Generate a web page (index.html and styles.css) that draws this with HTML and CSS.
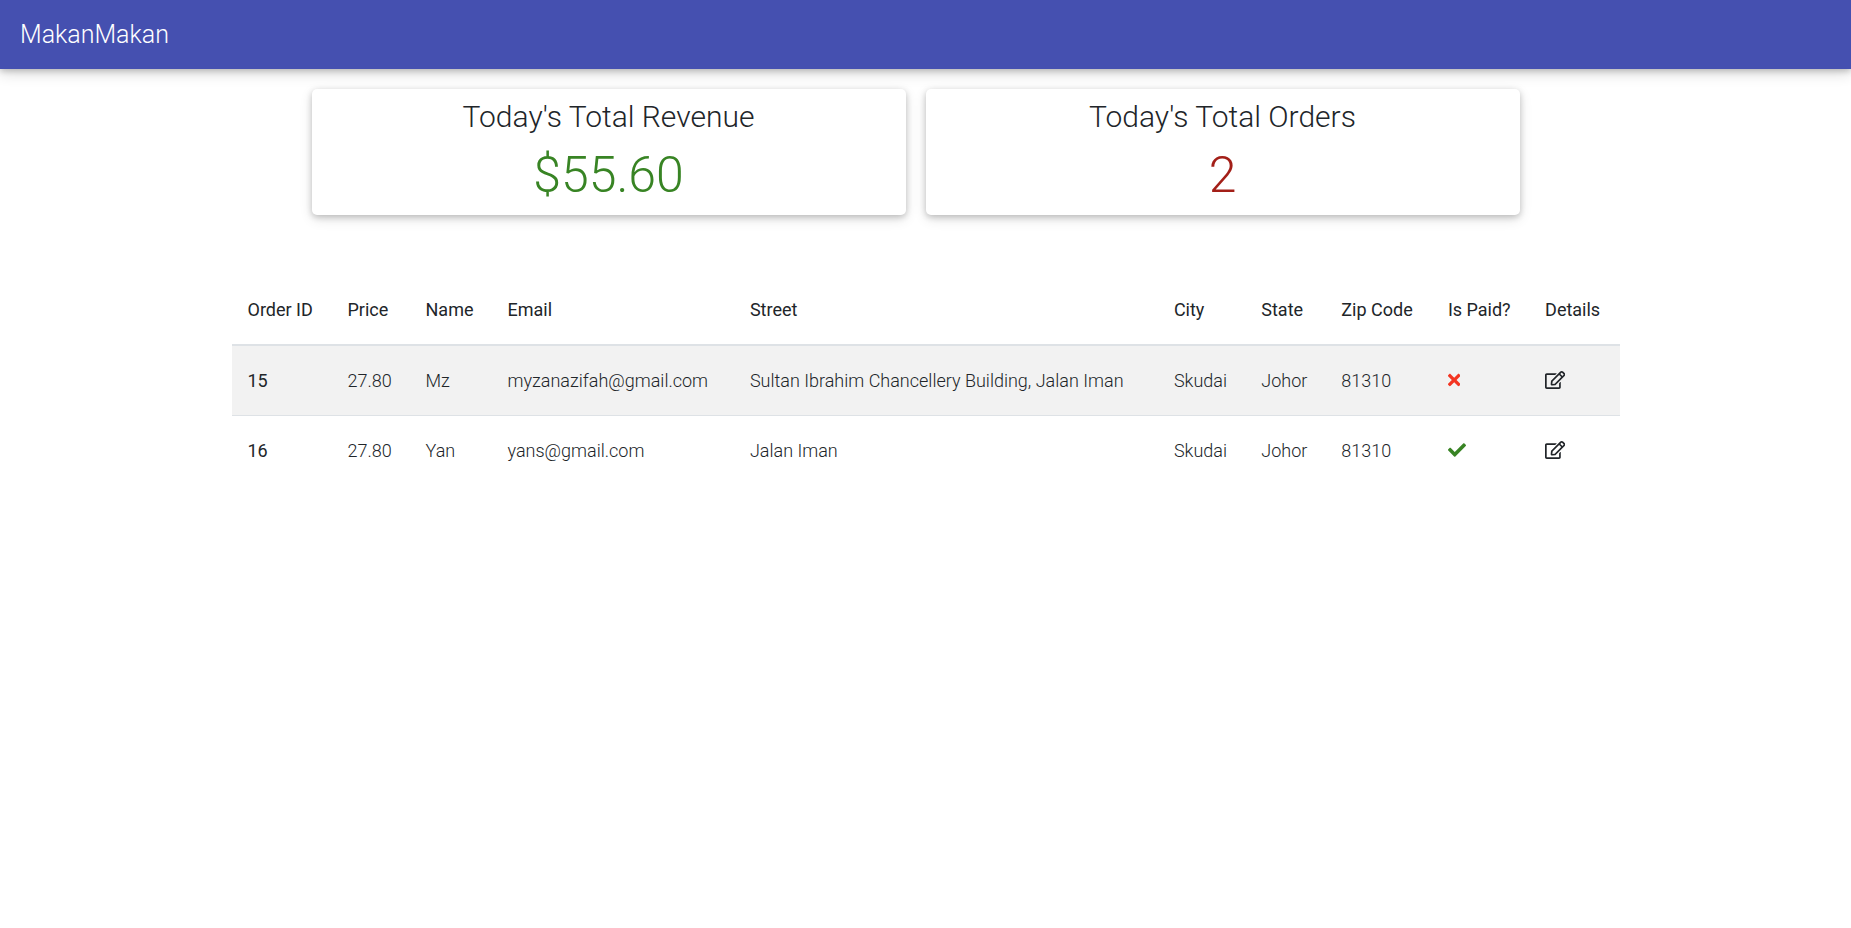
FILE: index.html
```
<!DOCTYPE html>
<html lang="en">
<head>
<meta charset="utf-8">
<title>MakanMakan</title>
<link rel="stylesheet" href="styles.css">
</head>
<body>
<svg class="sprite" width="0" height="0" aria-hidden="true">
  <symbol id="times" viewBox="0 0 352 512"><path d="M242.72 256l100.07-100.07c12.28-12.28 12.28-32.19 0-44.48l-22.24-22.24c-12.28-12.28-32.19-12.28-44.48 0L176 189.28 75.93 89.21c-12.28-12.28-32.19-12.28-44.48 0L9.21 111.45c-12.28 12.28-12.28 32.19 0 44.48L109.28 256 9.21 356.07c-12.28 12.28-12.28 32.19 0 44.48l22.24 22.24c12.28 12.28 32.2 12.28 44.48 0L176 322.72l100.07 100.07c12.28 12.28 32.2 12.28 44.48 0l22.24-22.24c12.28-12.28 12.28-32.19 0-44.48L242.72 256z"/></symbol>
  <symbol id="check" viewBox="0 0 512 512"><path d="M173.898 439.404l-166.4-166.4c-9.997-9.997-9.997-26.206 0-36.204l36.203-36.204c9.997-9.998 26.207-9.998 36.204 0L192 312.69 432.095 72.596c9.997-9.997 26.207-9.997 36.204 0l36.203 36.204c9.997 9.997 9.997 26.206 0 36.204l-294.4 294.401c-9.998 9.997-26.207 9.997-36.204-.001z"/></symbol>
  <symbol id="edit" viewBox="0 0 576 512"><path d="M402.300 344.900l32-32c5-5 13.700-1.500 13.700 5.700V464c0 26.500-21.500 48-48 48H48c-26.500 0-48-21.500-48-48V112c0-26.500 21.500-48 48-48h273.500c7.100 0 10.700 8.600 5.700 13.700l-32 32c-1.500 1.500-3.500 2.300-5.700 2.300H48v352h352V350.500c0-2.100.800-4.100 2.300-5.600zm156.600-201.800L296.300 405.700l-90.400 10c-26.200 2.900-48.500-19.200-45.600-45.600l10-90.400L432.900 17.100c22.900-22.900 59.900-22.900 82.700 0l43.200 43.200c22.900 22.900 22.900 60 .100 82.800zM460.100 174L402 115.900 216.200 301.800l-7.300 65.300 65.300-7.300L460.100 174zm64.800-79.700l-43.200-43.200c-4.100-4.100-10.800-4.100-14.800 0L436 82l58.100 58.100 30.900-30.900c4-4.200 4-10.800-.100-14.900z"/></symbol>
</svg>
<nav class="navbar"><a class="brand">MakanMakan</a></nav>
<main>
  <section class="cards">
    <div class="card">
      <h3 class="card-title">Today's Total Revenue</h3>
      <p class="card-value revenue">$55.60</p>
    </div>
    <div class="card">
      <h3 class="card-title">Today's Total Orders</h3>
      <p class="card-value orders">2</p>
    </div>
  </section>
  <table class="table">
    <colgroup>
      <col class="c-id"><col class="c-price"><col class="c-name"><col class="c-email"><col class="c-street"><col class="c-city"><col class="c-state"><col class="c-zip"><col class="c-paid"><col>
    </colgroup>
    <thead>
      <tr><th>Order ID</th><th>Price</th><th>Name</th><th>Email</th><th>Street</th><th>City</th><th>State</th><th>Zip Code</th><th>Is Paid?</th><th>Details</th></tr>
    </thead>
    <tbody>
      <tr class="striped"><th>15</th><td>27.80</td><td>Mz</td><td>myzanazifah@gmail.com</td><td>Sultan Ibrahim Chancellery Building, Jalan Iman</td><td>Skudai</td><td>Johor</td><td>81310</td><td><svg class="icon times"><use href="#times"/></svg></td><td><svg class="icon edit"><use href="#edit"/></svg></td></tr>
      <tr><th>16</th><td>27.80</td><td>Yan</td><td>yans@gmail.com</td><td>Jalan Iman</td><td>Skudai</td><td>Johor</td><td>81310</td><td><svg class="icon check"><use href="#check"/></svg></td><td><svg class="icon edit"><use href="#edit"/></svg></td></tr>
    </tbody>
  </table>
</main>
</body>
</html>
```
FILE: styles.css
```
* { box-sizing: border-box; }
body {
  margin: 0;
  font-family: Roboto, "Liberation Sans", sans-serif;
  font-size: 18px;
  font-weight: 300;
  line-height: 27px;
  color: #212529;
  background: #fff;
}
.sprite { position: absolute; }
.navbar {
  height: 69px;
  padding: 0 20px;
  display: flex;
  align-items: center;
  background: #4550b0;
  box-shadow: 0 2px 6px 0 rgba(0,0,0,.2), 0 5px 13px 0 rgba(0,0,0,.14);
}
.brand { color: #fff; font-size: 25px; line-height: 37px; }
.cards {
  display: grid;
  grid-template-columns: 594px 594px;
  gap: 20px;
  justify-content: center;
  padding: 20px 20px 0 0;
}
.card {
  height: 126px;
  padding-top: 9px;
  border-radius: 5px;
  background: #fff;
  text-align: center;
  box-shadow: 0 2px 6px 0 rgba(0,0,0,.2), 0 4px 13px 0 rgba(0,0,0,.12);
}
.card-title { margin: 0; font-size: 30px; font-weight: 300; line-height: 38px; }
.card-value { margin: 9px 0 0; font-size: 50px; line-height: 60px; }
.revenue { color: #388424; }
.orders { color: #a31f18; }
.table {
  width: 1388px;
  margin: 59px auto 0;
  table-layout: fixed;
  border-collapse: separate;
  border-spacing: 0;
}
.table th, .table td {
  height: 70px;
  padding: 0 0 0 16px;
  text-align: left;
  vertical-align: middle;
  font-weight: 300;
  white-space: nowrap;
}
.table th { font-weight: 400; }
.table thead th { height: 72px; border-bottom: 2px solid #dee2e6; }
.table tbody .striped th, .table tbody .striped td { background: #f2f2f2; border-bottom: 1px solid #dee2e6; }
.table tbody tr:last-child th, .table tbody tr:last-child td { height: 69px; }
.c-id { width: 100px; }
.c-price { width: 78px; }
.c-name { width: 82px; }
.c-email { width: 242.4px; }
.c-street { width: 424px; }
.c-city { width: 87.4px; }
.c-state { width: 80px; }
.c-zip { width: 106.6px; }
.c-paid { width: 97.2px; }
.icon { display: block; height: 18px; margin-bottom: 1px; fill: currentColor; }
.times { width: 12.4px; color: #f33522; }
.check { width: 18px; color: #388424; }
.edit { width: 20.3px; }
```
